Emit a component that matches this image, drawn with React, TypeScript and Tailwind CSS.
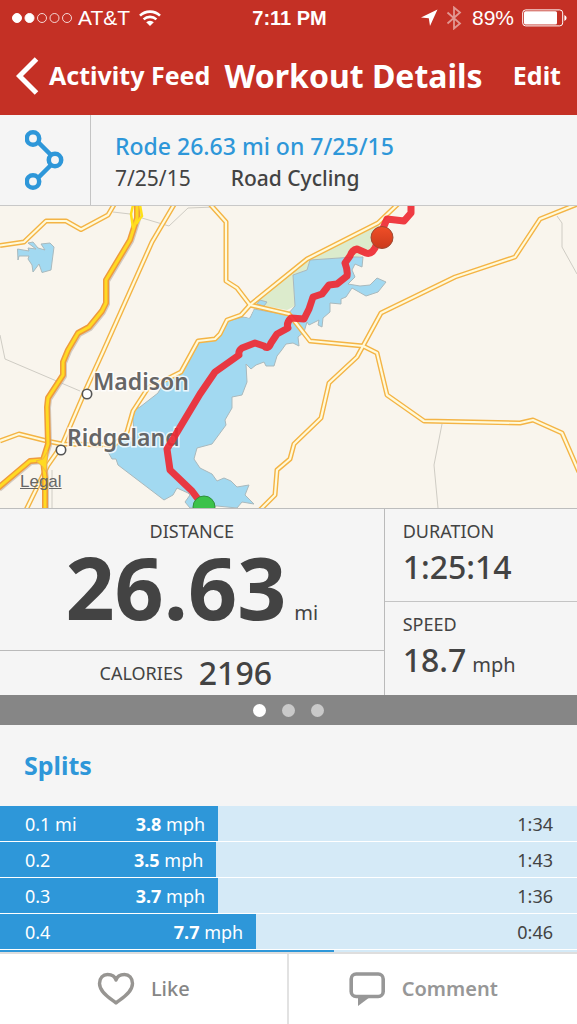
import React from 'react'

interface Split {
  label: string
  speed: string
  time: string
  bar: number // share of the full row width, in percent
}

const SPLITS: Split[] = [
  { label: '0.1 mi', speed: '3.8', time: '1:34', bar: 37.8 },
  { label: '0.2', speed: '3.5', time: '1:43', bar: 37.5 },
  { label: '0.3', speed: '3.7', time: '1:36', bar: 37.8 },
  { label: '0.4', speed: '7.7', time: '0:46', bar: 44.4 },
  { label: '', speed: '', time: '', bar: 57.8 },
]

const ROADS = [
  'M0 245.5 L24 242 L46 221 L66 221 L81 229.5 L108 215 L115 203',
  'M175 203 L152 242 L102 354 L86 389 L62 445 L48 465 L26 510',
  'M0 441 L19 434 L47 441 L62 444 L114 445 L127 432 L133 411 L148 388 L165 380 L181 372 L198 341 L215 339 L220 334 L227 320 L241 315 L250 305',
  'M209 203 L226 222 L226 281 L237 288 L250 305',
  'M250 305 L307 259 L378 223 L399 203',
  'M250 305 L289 314 L310 341 L363 346',
  'M580 203 L540 219 L515 257 L455 277 L381 313 L363 346 L357 357 L329 383 L321 418 L294 444 L290 459 L277 470 L275 495 L260 510',
  'M363 346 L377 353 L387 395 L424 421 L520 423 L533 420 L562 433 L579 472',
]

const HIGHWAY =
  'M137 203 L137 218 L130 240 L106 280 L106 303 L102 311 L89 327 L78 333 L68 350 L63 362 L63 375 L48 398 L47 407 L48 444 L43 460 L45 478 L45 510 M43 460 L30 461 L-2 488'

const LAKE =
  'M310 260 L354 257 L363 257 L362 267 L355 264 L352 270 L355 277 L348 284 L360 286 L370 285 L377 278 L386 282 L378 292 L366 296 L352 288 L346 297 L341 299 L341 304 L330 303 L330 312 L323 318 L322 327 L318 325 L319 320 L309 325 L307 322 L304 332 L298 337 L299 346 L293 343 L286 344 L281 351 L277 356 L274 366 L266 366 L264 362 L256 365 L251 369 L246 364 L247 382 L242 395 L232 397 L232 408 L225 420 L226 425 L212 444 L197 448 L194 459 L200 468 L212 474 L217 481 L224 478 L231 481 L237 487 L249 485 L245 495 L254 504 L242 502 L237 508 L217 506 L190 508 L185 502 L190 495 L188 493 L177 488 L173 495 L164 500 L118 465 L116 459 L112 459 L108 452 L115 447 L127 436 L135 440 L132 411 L140 407 L158 393 L164 382 L181 374 L198 342 L218 339 L228 321 L243 317 L250 318 L254 309 L287 315 L295 306 L293 275 L307 270 Z'

const ROUTE =
  'M411 203 L411 213 L404 221 L387 219 L381 233 L375 248 Q371 255 366 253 L357 249 Q352 250 350 256 L345 263 Q348 271 347 276 L337 284 L329 285 L322 294 L313 297 L309 309 L304 319 L291 318 Q286 323 288 328 L277 334 L271 343 Q268 350 264 346 L255 343 L242 348 Q238 351 239 355 L215 372 L200 394 L167 449 L170 470 L192 491 L204 507'

function RouteMap() {
  return (
    <svg viewBox="0 206 577 302" className="block w-full" role="img" aria-label="Route map">
      <defs>
        <linearGradient id="pin" x1="0" y1="0" x2="0" y2="1">
          <stop offset="0" stopColor="#f04e27" />
          <stop offset="1" stopColor="#cb3a1c" />
        </linearGradient>
      </defs>
      <rect y="206" width="577" height="302" fill="#f9f5ed" />
      <g fill="none" stroke="#cfccc4">
        <path d="M113 212 L130 214 M142 218 L169 226 L188 208 L215 207" />
        <path d="M0 335 L5 359 L80 391 M52 470 V508" />
        <path d="M442 424 L434 465 L438 508 M557 216 L562 223 L562 247 L577 274" />
      </g>
      <path d="M310 260 L378 225 L386 236 L372 251 L357 257 Z" fill="#dcebcc" />
      <path d="M254 304 L310 259 L307 270 L293 275 L295 306 L287 310 Z" fill="#dcebcc" />
      <g fill="#a2d9f1" stroke="#a9b9bd">
        <path d={LAKE} />
        <path d="M260 300 L267 302 L264 306 L257 304 Z" />
        <path d="M17.5 249 L29 251 L28 248 L36 249 L28 243 L33 242 L38 248 L45 250 L41 244 L50 243 L54 247 L51 270 L42 272.5 L39 264 L33 272 L32 265 L28 259 L29 256 L19 256 L18 260 Z" />
      </g>
      <path d="M243 316 L254 309 L249 318 Z" fill="#f9f5ed" />
      <g fill="none" strokeLinejoin="round">
        {ROADS.map(d => <path key={d} d={d} stroke="#f4b445" strokeWidth="5" />)}
        {ROADS.map(d => <path key={d} d={d} stroke="#fffadb" strokeWidth="2.2" />)}
        <path d={HIGHWAY} stroke="#b9aea4" strokeOpacity=".6" strokeWidth="6" transform="translate(1 1)" />
        <path d={HIGHWAY} stroke="#ef9a3c" strokeWidth="6" />
        <path d={HIGHWAY} stroke="#ffda23" strokeWidth="3" />
        <path d="M133 205 L131 214 L133 228 M140 205 L142 216 L136 224" stroke="#ffe11a" strokeWidth="2.5" />
      </g>
      <path d="M36 461 L43 459 L48 451 L46 472 L42 466 Z" fill="#ffda23" stroke="#f4b445" />
      <g fontFamily="'Noto Sans', sans-serif" fontSize="23" fontWeight="600" fill="#666" stroke="#fff" strokeOpacity=".8" strokeWidth="3" paintOrder="stroke">
        <text x="93" y="390">Madison</text>
        <text x="67" y="446">Ridgeland</text>
      </g>
      <g fill="#fff" stroke="#555" strokeWidth="1.6">
        <circle cx="87" cy="394" r="4.7" />
        <circle cx="61" cy="450" r="4.7" />
      </g>
      <path d={ROUTE} fill="none" stroke="#ee2a33" strokeOpacity=".92" strokeWidth="7" strokeLinejoin="round" />
      <circle cx="382" cy="237.5" r="11" fill="url(#pin)" stroke="#9c4a33" />
      <circle cx="204" cy="507" r="11" fill="#3bc24b" stroke="#2f8f3c" />
    </svg>
  )
}

function StatusBar() {
  return (
    <div className="flex h-9 items-center pr-2.5 pl-3 font-['Liberation_Sans',sans-serif] text-[21px]">
      <div className="flex flex-1 items-center">
        <svg width="62" height="12" viewBox="0 0 62 12" fill="none" stroke="#fff" aria-hidden="true">
          <circle cx="5" cy="6" r="4.5" fill="#fff" />
          <circle cx="17.5" cy="6" r="4.5" fill="#fff" />
          <circle cx="30" cy="6" r="4.5" strokeWidth=".8" />
          <circle cx="42.5" cy="6" r="4.5" strokeWidth=".8" />
          <circle cx="55" cy="6" r="4.5" strokeWidth=".8" />
        </svg>
        <span className="ml-1">AT&amp;T</span>
        <svg className="ml-2" width="24" height="18" viewBox="0 0 24 18" fill="none" stroke="#fff" strokeWidth="2.6" aria-hidden="true">
          <path d="M2 6.6 A14.5 14.5 0 0 1 22 6.6" />
          <path d="M5.6 10.4 A9.4 9.4 0 0 1 18.4 10.4" />
          <path d="M12 17 L8.2 13.2 A5.4 5.4 0 0 1 15.8 13.2 Z" fill="#fff" stroke="none" />
        </svg>
      </div>
      <span className="text-xl font-bold">7:11 PM</span>
      <div className="flex flex-1 items-center justify-end">
        <svg width="18" height="18" viewBox="0 0 18 18" fill="#fff" aria-hidden="true">
          <path d="M17.5 .5 L10 17 L8.8 9.2 L1 8.5 Z" />
        </svg>
        <svg className="ml-2 opacity-50" width="16" height="24" viewBox="0 0 16 24" fill="none" stroke="#fff" strokeWidth="1.8" aria-hidden="true">
          <path d="M1.5 6.5 L14 17.5 L8 22.5 V1.5 L14 6.5 L1.5 17.5" />
        </svg>
        <span className="ml-2.5">89%</span>
        <svg className="ml-2" width="45" height="18" viewBox="0 0 45 18" aria-hidden="true">
          <rect x=".7" y=".9" width="40" height="16" rx="3" fill="none" stroke="#fff" />
          <rect x="2" y="2.2" width="33" height="13.4" rx="1.5" fill="#fff" />
          <path d="M42.4 6 Q44.6 7 44.6 9 Q44.6 11 42.4 12 Z" fill="#fff" />
        </svg>
      </div>
    </div>
  )
}

export default function App() {
  return (
    <div className="flex h-screen flex-col overflow-hidden bg-[#f5f5f5] font-['Noto_Sans',sans-serif] text-[#434343]">
      {/* ── Header ── */}
      <header className="h-[115px] shrink-0 bg-[#c43025] text-white">
        <StatusBar />
        <div className="flex h-20 items-center justify-between px-4 font-bold">
          <button className="flex items-center gap-2.5 text-[25px]">
            <svg width="23" height="38" viewBox="0 0 23 38" fill="none" stroke="#fff" strokeWidth="5" aria-hidden="true">
              <path d="M20.5 2 L3.5 19 L20.5 36" />
            </svg>
            Activity Feed
          </button>
          <h1 className="whitespace-nowrap text-[32px]">Workout Details</h1>
          <button className="ml-4 text-[25px]">Edit</button>
        </div>
      </header>

      {/* ── Workout summary ── */}
      <section className="flex h-[91px] shrink-0 border-b border-[#c8c8c8]">
        <div className="flex w-[91px] items-center justify-center border-r border-[#c4c4c4]">
          <svg width="40" height="62" viewBox="0 0 40 62" fill="none" stroke="#2e97d9" strokeWidth="4.5" aria-hidden="true">
            <path d="M14 14 L26 26 M26 36 L14 48" />
            <circle cx="8" cy="9.5" r="6.2" />
            <circle cx="30" cy="31" r="6.2" />
            <circle cx="8" cy="52.5" r="6.2" />
          </svg>
        </div>
        <div className="flex flex-col justify-center pt-1 pl-6">
          <h2 className="text-[23px] leading-8 font-medium text-[#2e97d9]">Rode 26.63 mi on 7/25/15</h2>
          <p className="flex gap-10 text-[21px] leading-8">
            <span>7/25/15</span>
            <span className="font-medium">Road Cycling</span>
          </p>
        </div>
      </section>

      {/* ── Map ── */}
      <section className="relative shrink-0 border-b border-[#bdbdbd]">
        <RouteMap />
        <a href="#legal" className="absolute bottom-4 left-5 font-['Liberation_Sans',sans-serif] text-[17px] leading-5 text-[#666] underline">Legal</a>
      </section>

      {/* ── Stats ── */}
      <section className="grid h-[186px] shrink-0 grid-cols-[2fr_1fr]">
        <div className="flex flex-col border-r border-[#bababa] text-center">
          <div className="h-[142px] border-b border-[#bababa] pt-2">
            <div className="text-lg leading-7">DISTANCE</div>
            <div className="flex items-baseline justify-center gap-2 leading-[84px]">
              <span className="text-[86px] font-bold">26.63</span>
              <span className="text-xl">mi</span>
            </div>
          </div>
          <div className="flex flex-1 items-center justify-center gap-4 pr-3">
            <span className="text-lg">CALORIES</span>
            <span className="text-[32px] leading-10 font-medium">2196</span>
          </div>
        </div>
        <div className="flex flex-col">
          <div className="h-[93px] border-b border-[#c4c4c4] pt-2 pl-4.5">
            <div className="text-lg leading-7">DURATION</div>
            <div className="text-[32px] leading-11 font-medium">1:25:14</div>
          </div>
          <div className="pt-2 pl-4.5">
            <div className="text-lg leading-7">SPEED</div>
            <div className="flex items-baseline gap-1.5 leading-11">
              <span className="text-[32px] font-medium">18.7</span>
              <span className="text-xl">mph</span>
            </div>
          </div>
        </div>
      </section>

      {/* ── Pager ── */}
      <div className="flex h-[30px] shrink-0 items-center justify-center gap-4 bg-[#868686]">
        <button aria-label="Page 1" className="size-[13px] rounded-full bg-white" />
        <button aria-label="Page 2" className="size-[13px] rounded-full bg-[#c9c9c9]" />
        <button aria-label="Page 3" className="size-[13px] rounded-full bg-[#c9c9c9]" />
      </div>

      {/* ── Splits ── */}
      <section className="min-h-0 flex-1 overflow-hidden">
        <h2 className="flex h-[81px] items-center pl-6 text-[25px] font-bold text-[#2e97d9]">Splits</h2>
        <table className="block w-full text-lg leading-[37px]">
          <tbody className="block">
            {SPLITS.map(s => (
              <tr key={s.label} className="flex h-9 border-b border-white bg-[#d5eaf7]">
                <th scope="row" className="w-24 bg-[#2e97d9] pl-[25px] text-left font-normal text-white">{s.label}</th>
                <td className="bg-[#2e97d9] pr-[13px] text-right text-white" style={{ width: `calc(${s.bar}% - 96px)` }}>
                  {s.speed && <><b>{s.speed}</b> mph</>}
                </td>
                <td className="flex-1 pr-6 text-right">{s.time}</td>
              </tr>
            ))}
          </tbody>
        </table>
      </section>

      {/* ── Actions ── */}
      <footer className="grid h-[72px] shrink-0 grid-cols-2 border-t-2 border-[#dedede] bg-white text-xl text-[#868686]">
        <button className="flex items-center justify-center gap-4 border-r-2 border-[#e2e2e2]">
          <svg width="38" height="34" viewBox="0 0 38 34" fill="none" stroke="#979592" strokeWidth="3.4" strokeLinejoin="round" aria-hidden="true">
            <path d="M19 31 C15 27.5 2.5 21 2.5 11.5 C2.5 6 6 2.5 10.5 2.5 C15 2.5 18 4.5 19 8 C20 4.5 23 2.5 27.5 2.5 C32 2.5 35.5 6 35.5 11.5 C35.5 21 23 27.5 19 31 Z" />
          </svg>
          <span className="font-medium">Like</span>
        </button>
        <button className="flex items-center justify-center gap-4 pr-5 text-[#979797]">
          <svg width="38" height="34" viewBox="0 0 38 34" fill="none" aria-hidden="true">
            <rect x="3.2" y="2" width="32" height="22.5" rx="5" stroke="#979797" strokeWidth="3.6" />
            <path d="M10 25 H22 L10 34 Z" fill="#979797" />
          </svg>
          <span className="font-semibold">Comment</span>
        </button>
      </footer>
    </div>
  )
}
